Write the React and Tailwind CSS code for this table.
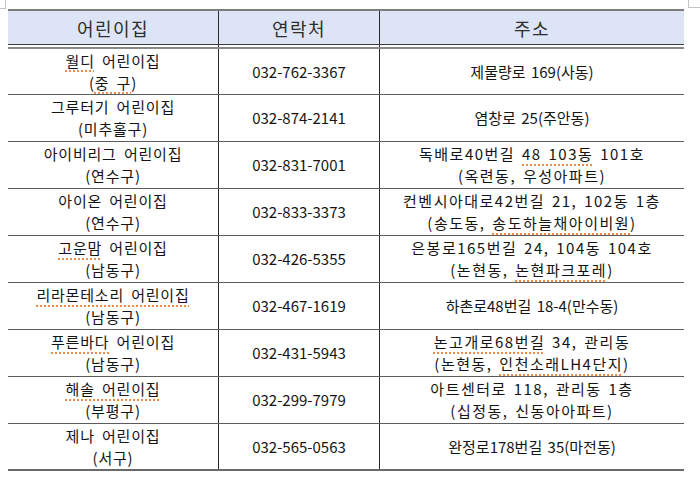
import React from "react";

const rows = [
  {
    name: [{ u: "월디" }, " 어린이집"],
    gu: ["(", { u: "중 구" }, ")"],
    phone: "032-762-3367",
    addr: [["제물량로 169(사동)"]],
  },
  {
    name: ["그루터기 어린이집"],
    gu: ["(미추홀구)"],
    phone: "032-874-2141",
    addr: [["염창로 25(주안동)"]],
  },
  {
    name: ["아이비리그 어린이집"],
    gu: ["(연수구)"],
    phone: "032-831-7001",
    addr: [["독배로40번길 ", { u: "48 103동" }, " 101호"], ["(옥련동, 우성아파트)"]],
    wide: true,
  },
  {
    name: ["아이온 어린이집"],
    gu: ["(연수구)"],
    phone: "032-833-3373",
    addr: [["컨벤시아대로42번길 21, 102동 1층"], ["(송도동, ", { u: "송도하늘채아이비원" }, ")"]],
    wide: true,
  },
  {
    name: [{ u: "고운맘" }, " 어린이집"],
    gu: ["(남동구)"],
    phone: "032-426-5355",
    addr: [["은봉로165번길 24, 104동 104호"], ["(논현동, ", { u: "논현파크포레" }, ")"]],
    wide: true,
  },
  {
    name: [{ u: "리라몬테소리 어린이집" }],
    gu: ["(남동구)"],
    phone: "032-467-1619",
    addr: [["하촌로48번길 18-4(만수동)"]],
  },
  {
    name: [{ u: "푸른바다" }, " 어린이집"],
    gu: ["(남동구)"],
    phone: "032-431-5943",
    addr: [[{ u: "논고개로68번길" }, " 34, 관리동"], ["(논현동, ", { u: "인천소래LH4단지" }, ")"]],
    wide: true,
  },
  {
    name: [{ u: "해솔 어린이집" }],
    gu: ["(부평구)"],
    phone: "032-299-7979",
    addr: [["아트센터로 118, 관리동 1층"], ["(십정동, 신동아아파트)"]],
    wide: true,
  },
  {
    name: ["제나 어린이집"],
    gu: ["(서구)"],
    phone: "032-565-0563",
    addr: [["완정로178번길 35(마전동)"]],
  },
];

function Line({ parts }) {
  return (
    <div className="whitespace-pre">
      {parts.map((p, i) =>
        typeof p === "string" ? (
          <span key={i}>{p}</span>
        ) : (
          <span
            key={i}
            className="underline decoration-dotted decoration-[#ee8a4a] decoration-[1.5px] underline-offset-[4px]"
          >
            {p.u}
          </span>
        )
      )}
    </div>
  );
}

export default function App() {
  return (
    <div
      className="relative w-[700px] h-[477px] bg-white pt-[9px] pl-[8px] text-[15px] text-[#141414]"
      style={{ fontFamily: '"Noto Sans CJK KR", "Noto Sans", sans-serif' }}
    >
      {/* page corner marks */}
      <div className="absolute left-0 top-0 w-[6px] h-[9px] border-r border-b border-[#c4c4c4]" />
      <div className="absolute left-[688px] top-0 w-[12px] h-[8px] border-l border-b border-[#c4c4c4]" />

      <div className="w-[676px]">
        {/* Header */}
        <div className="grid grid-cols-[210px_161px_305px] h-[36px] border-t-2 border-b border-t-[#7d7d7d] border-b-[#3a3a3a] bg-[#dce4f5] text-[18px] text-[#2e2e2e] tracking-[1.5px]">
          <div className="flex items-center justify-center leading-none">어린이집</div>
          <div className="flex items-center justify-center leading-none border-l border-[#2a2a2a]">연락처</div>
          <div className="flex items-center justify-center leading-none border-l border-[#2a2a2a]">주소</div>
        </div>
        <div className="grid grid-cols-[210px_161px_305px] h-[2px]">
          <div />
          <div className="border-l border-[#2a2a2a]" />
          <div className="border-l border-[#2a2a2a]" />
        </div>
        <div className="h-[2px] bg-[#8a8a8a]" />

        {/* Body */}
        {rows.map((r, i) => (
          <div
            key={i}
            className={`grid grid-cols-[210px_161px_305px] border-b ${
              i === 0 ? "h-[46px]" : "h-[47px]"
            } ${i === rows.length - 1 ? "border-b-2 border-[#6a6a6a]" : "border-[#5c5c5c]"}`}
          >
            <div className="flex flex-col items-center justify-center leading-[22px] tracking-[0.8px] [word-spacing:3px]">
              <Line parts={r.name} />
              <Line parts={r.gu} />
            </div>
            <div className="flex items-center justify-center border-l border-[#2a2a2a] leading-[22px]">
              {r.phone}
            </div>
            <div
              className={`flex flex-col items-center justify-center border-l border-[#2a2a2a] leading-[22px] ${
                r.wide ? "tracking-[1.5px] [word-spacing:2px]" : "[word-spacing:2px]"
              }`}
            >
              {r.addr.map((a, j) => (
                <Line key={j} parts={a} />
              ))}
            </div>
          </div>
        ))}
      </div>
    </div>
  );
}
